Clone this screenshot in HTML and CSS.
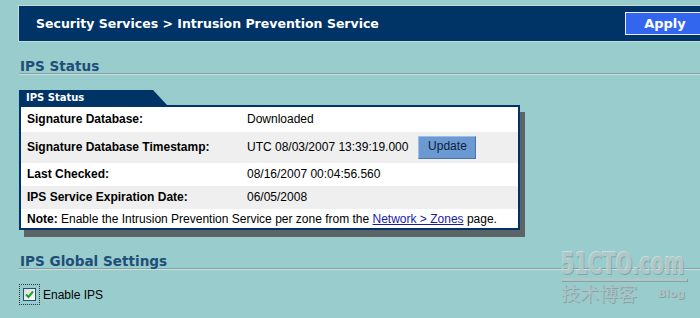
FILE: index.html
```html
<!DOCTYPE html>
<html lang="en">
<head>
  <meta charset="UTF-8">
  <title>Security Services - Intrusion Prevention Service</title>
  <link rel="stylesheet" href="styles.css">
</head>
<body>
  <div class="page">
    <div class="titlebar">
      <span class="crumb">Security Services &gt; Intrusion Prevention Service</span>
      <button class="apply">Apply</button>
    </div>

    <h2 class="section">IPS Status</h2>
    <div class="box">
      <div class="box-tab">IPS Status</div>
      <div class="box-body">
        <div class="row first">
          <span class="label">Signature Database:</span>
          <span class="value">Downloaded</span>
        </div>
        <div class="row alt tall">
          <span class="label">Signature Database Timestamp:</span>
          <span class="value">UTC 08/03/2007 13:39:19.000 <button class="update">Update</button></span>
        </div>
        <div class="row">
          <span class="label">Last Checked:</span>
          <span class="value">08/16/2007 00:04:56.560</span>
        </div>
        <div class="row alt">
          <span class="label">IPS Service Expiration Date:</span>
          <span class="value">06/05/2008</span>
        </div>
        <div class="row note">
          <span><b>Note:</b> Enable the Intrusion Prevention Service per zone from the <a href="#">Network &gt; Zones</a> page.</span>
        </div>
      </div>
    </div>

    <h2 class="section second">IPS Global Settings</h2>
    <label class="check">
      <span class="focus">
        <span class="tick">
          <svg width="11" height="11" viewBox="0 0 11 11"><polyline points="2,5.5 4.5,8 9,2.5" fill="none" stroke="#21a121" stroke-width="2"/></svg>
        </span>
      </span>
      <span>Enable IPS</span>
    </label>
  </div>

  <!-- site watermark over the bottom right corner -->
  <div class="watermark">
    <div class="wm-logo">51CTO.com</div>
    <div class="wm-bar"></div>
    <div class="wm-sub">
      <span class="wm-cjk">技术博客</span>
      <span class="wm-blog">Blog</span>
    </div>
  </div>
</body>
</html>
```

FILE: styles.css
```css
html, body {
  margin: 0;
  padding: 0;
  overflow: hidden;
}
body {
  background: #99cccc;
  font-family: "Liberation Sans", Arial, sans-serif;
  font-size: 12px;
  color: #000;
}
.page {
  padding: 6px 0 0 19px;
}
.titlebar {
  display: flex;
  align-items: center;
  justify-content: space-between;
  height: 35px;
  margin-right: -10px;
  padding-left: 17px;
  background: #003366;
  box-shadow: 0 0 0 1px #c2dcdc;
}
.crumb {
  color: #fff;
  font: bold 12.5px "DejaVu Sans", Verdana, sans-serif;
}
.apply {
  width: 80px;
  height: 23px;
  margin-right: 5px;
  padding: 0;
  background: #3366ee;
  border: 1px solid #e8eef8;
  color: #fff;
  font: bold 13px "DejaVu Sans", Verdana, sans-serif;
}
.section {
  margin: 18px 0 0;
  padding-left: 1px;
  font: bold 13.6px/14px "DejaVu Sans", Verdana, sans-serif;
  color: #1f4e79;
  border-bottom: 1px solid #8a9ea0;
  box-shadow: 0 1px 0 #c4e0e0;
}
.section.second {
  margin-top: 24px;
}
.box {
  margin-top: 16px;
  width: 501px;
}
.box-tab {
  width: 148px;
  height: 15px;
  box-sizing: border-box;
  padding-left: 7px;
  background: #003366;
  clip-path: polygon(0 0, 134px 0, 100% 100%, 0 100%);
  color: #fff;
  font: bold 10px/15px "DejaVu Sans", Verdana, sans-serif;
}
.box-body {
  border: 2px solid #003366;
  background: #fff;
  box-shadow: 5px 7px 0 #5c6468;
}
.row {
  display: grid;
  grid-template-columns: 220px auto;
  align-items: center;
  padding: 4px 6px;
  line-height: 15px;
}
.row.first {
  padding: 5px 6px;
}
.row.alt {
  background: #efefef;
}
.row.tall {
  padding: 4px 6px;
}
.row.note {
  display: block;
  padding: 3px 6px 1px;
}
.label {
  font-weight: bold;
}
.value {
  display: flex;
  align-items: center;
  gap: 10px;
}
.update {
  width: 58px;
  height: 23px;
  padding: 0 0 3px;
  background: #6b9ad3;
  border: 1px solid;
  border-color: #9dbde6 #4a74a8 #4a74a8 #9dbde6;
  color: #10203a;
  font: 12px "Liberation Sans", Arial, sans-serif;
}
.note a {
  color: #1a1aa6;
}
.check {
  display: inline-flex;
  align-items: center;
  gap: 3px;
  margin-top: 15px;
}
.focus {
  display: inline-flex;
  padding: 3px;
  border: 1px dotted #333;
}
.tick {
  display: inline-flex;
  width: 11px;
  height: 11px;
  border: 1px solid #1c5180;
  background: linear-gradient(135deg, #dcdcd6, #fff);
}
.watermark {
  position: absolute;
  left: 561px;
  top: 250px;
  width: 126px;
  opacity: 0.8;
}
.wm-logo {
  height: 26px;
  font: bold 31px/26px "DejaVu Sans Condensed", "DejaVu Sans", sans-serif;
  color: #b4c6c7;
  text-shadow: -1px -1px 0 #d5e2e2, 1px 1px 0 #7f9a9c;
  transform: scaleX(0.7);
  transform-origin: left;
  white-space: nowrap;
}
.wm-bar {
  height: 3px;
  margin-top: 2px;
  background: #b4c6c7;
  box-shadow: 1px 1px 0 #7f9a9c;
}
.wm-sub {
  display: flex;
  justify-content: space-between;
  align-items: center;
  margin-top: 2px;
}
.wm-cjk {
  font: 19px/20px "Noto Sans CJK SC", sans-serif;
  color: #b0c4c5;
  text-shadow: 1px 1px 0 #7f9a9c;
}
.wm-blog {
  margin-right: 2px;
  font: bold 11px "DejaVu Sans", sans-serif;
  color: #b0c4c5;
  text-shadow: 1px 1px 0 #7f9a9c;
}
```
